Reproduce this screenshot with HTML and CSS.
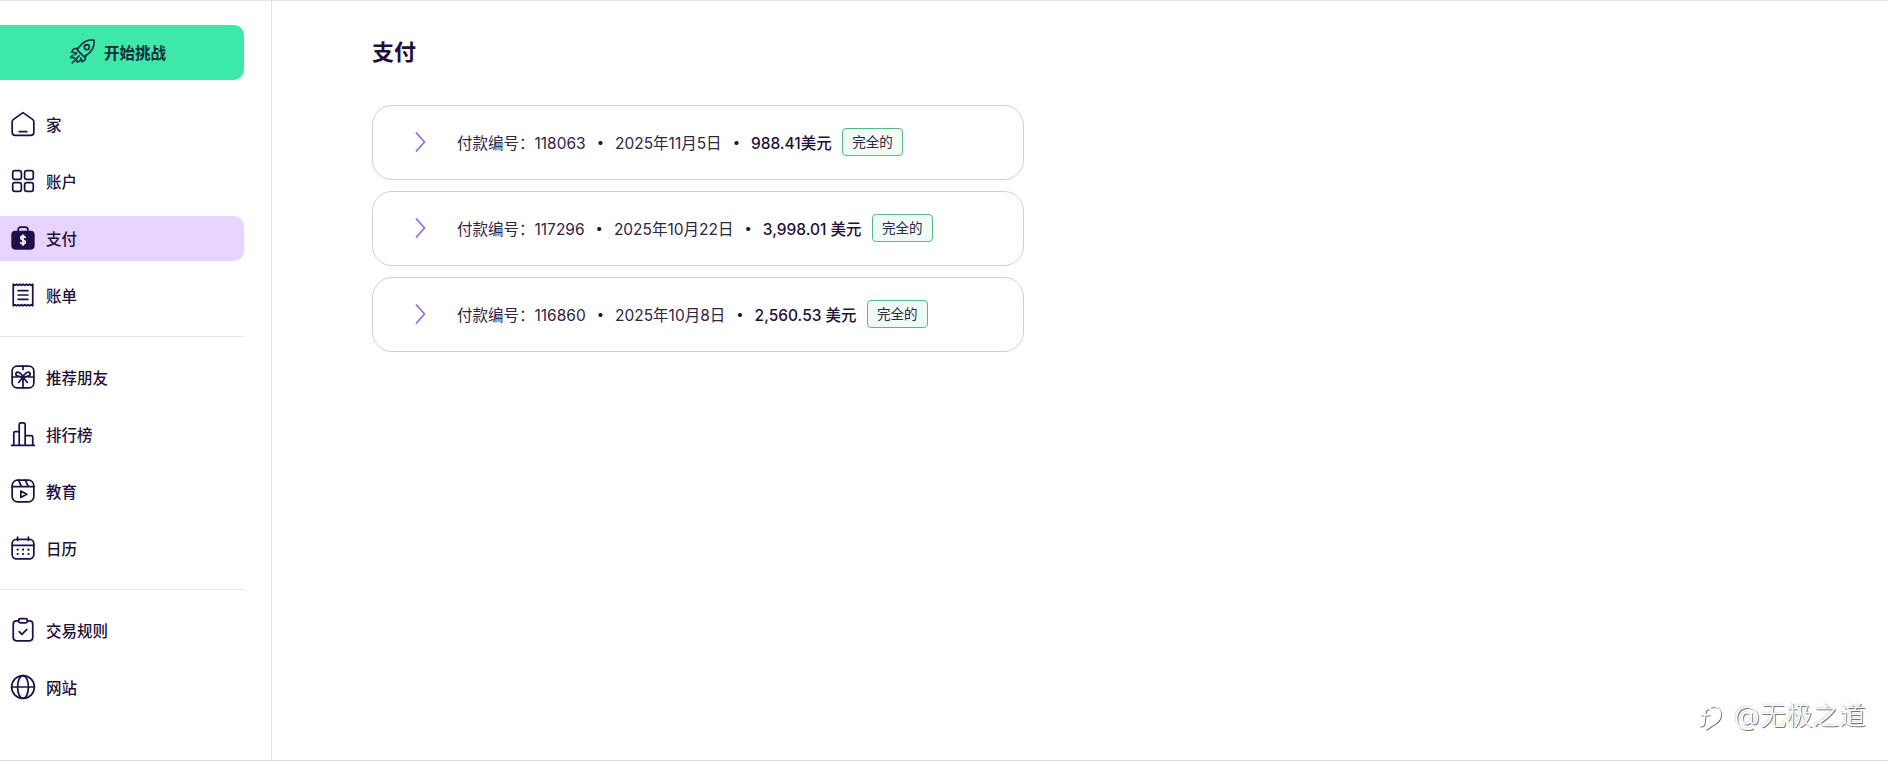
FILE: index.html
```html
<!DOCTYPE html>
<html lang="zh-CN">
<head>
    <meta charset="UTF-8">
    <meta name="viewport" content="width=device-width, initial-scale=1.0">
    <title>支付</title>
    <link rel="stylesheet" href="styles.css">
</head>
<body>
    <div class="page">
        <div class="sidebar">
            <button class="start-btn">
                <svg class="rocket" viewBox="0 0 24 24"><path d="M23 1c-4.500-.5-9 1-12 4.500L7.500 10l6.500 6.500 4.500-3.500C22 10 23.500 5.500 23 1z"/><circle cx="16.500" cy="7.500" r="2.300"/><path d="M8.500 8.500L4.500 9 2.500 12l3.500 1M15.500 15l-.5 4-3 2-1-3.500"/><path d="M7 13l-1.500 1.500M9.500 15.500L3 22M1.500 17l2-2M11 19l-2 2M5 17.500l-2.500-.5M7 19l.5 2.500"/></svg>
                开始挑战
            </button>

            <div class="nav-group first">
                <div class="nav-item">
                    <svg viewBox="0 0 24 24"><path d="M12 1.500l8.800 6.200c.8.600 1.200 1.300 1.200 2.300v9.500c0 1.700-1.300 3-3 3H5c-1.700 0-3-1.300-3-3V10c0-1 .4-1.700 1.200-2.300z"/><path d="M8.500 19h7"/></svg>
                    家
                </div>
                <div class="nav-item">
                    <svg viewBox="0 0 24 24"><rect x="2.500" y="2.500" width="8" height="8" rx="2"/><rect x="13.500" y="2.500" width="8" height="8" rx="2"/><rect x="2.500" y="13.500" width="8" height="8" rx="2"/><rect x="13.500" y="13.500" width="8" height="8" rx="2"/></svg>
                    账户
                </div>
                <div class="nav-item active">
                    <svg viewBox="0 0 24 24"><path class="solid" d="M5 6h14c1.700 0 3 1.300 3 3v10c0 1.700-1.300 3-3 3H5c-1.700 0-3-1.300-3-3V9c0-1.700 1.300-3 3-3z"/><path d="M7.500 6V4.500c0-1.400 1.100-2.500 2.500-2.500h4c1.400 0 2.500 1.100 2.500 2.500V6"/><path class="cut" d="M14 11.500c-.3-.8-1.100-1.200-2-1.200-1.200 0-2.100.7-2.100 1.700 0 2.300 4.300 1.300 4.300 3.700 0 1-1 1.800-2.200 1.800-1 0-1.900-.5-2.200-1.300M12 9.300v9.400"/></svg>
                    支付
                </div>
                <div class="nav-item">
                    <svg viewBox="0 0 24 24"><path d="M3 2l1.500 1L6 2l1.500 1L9 2l1.500 1L12 2l1.500 1L15 2l1.500 1L18 2l1.500 1L21 2v20l-1.500-1-1.500 1-1.500-1-1.500 1-1.500-1-1.500 1-1.500-1L9 22l-1.500-1L6 22l-1.500-1L3 22z"/><path d="M7.500 8h9M7.500 12h9M7.500 16h9"/></svg>
                    账单
                </div>
            </div>

            <div class="nav-group">
                <div class="nav-item">
                    <svg viewBox="0 0 24 24"><rect x="2" y="2" width="20" height="20" rx="4.500"/><path d="M2 12h5M17 12h5"/><path d="M12 12c-1-3.500-5.500-6-6.500-3.500S8.500 12 12 12zM12 12c1-3.500 5.500-6 6.500-3.500S15.500 12 12 12zM12 12l-4 5M12 12l4 5M12 12v10M12 2v3"/></svg>
                    推荐朋友
                </div>
                <div class="nav-item">
                    <svg viewBox="0 0 24 24"><path d="M1.500 22.500h21M3.500 22.500V11c0-.8.500-1.300 1.300-1.300H8.500M8.500 22.500V3.500c0-1 .700-1.700 1.700-1.700h2.100c1 0 1.700.7 1.700 1.700v19M14 13.500h5.500c1 0 1.500.6 1.500 1.500v7.500"/></svg>
                    排行榜
                </div>
                <div class="nav-item">
                    <svg viewBox="0 0 24 24"><rect x="2" y="2" width="20" height="20" rx="5"/><path d="M2 8h20M8 2l2.500 6M14 2l3 6"/><path d="M10 12l5.500 3-5.500 3z"/></svg>
                    教育
                </div>
                <div class="nav-item">
                    <svg viewBox="0 0 24 24"><rect x="2" y="4" width="20" height="18" rx="4"/><path d="M2 9.500h20M7 2v3M17 2v3"/><path class="dots" d="M7 13.500h.1M12 13.500h.1M17 13.500h.1M7 17.500h.1M12 17.500h.1M17 17.500h.1"/></svg>
                    日历
                </div>
            </div>

            <div class="nav-group last">
                <div class="nav-item">
                    <svg viewBox="0 0 24 24"><path d="M8 3.500H6c-1.700 0-3 1.300-3 3V19c0 1.700 1.300 3 3 3h12c1.700 0 3-1.300 3-3V6.500c0-1.700-1.300-3-3-3h-2"/><rect x="8" y="1.500" width="8" height="4" rx="1.500"/><path d="M8.500 13.500l2.500 2.500 4.500-4.500"/></svg>
                    交易规则
                </div>
                <div class="nav-item">
                    <svg viewBox="0 0 24 24"><circle cx="12" cy="12" r="10.500"/><path d="M1.500 12h21"/><ellipse cx="12" cy="12" rx="5" ry="10.500"/></svg>
                    网站
                </div>
            </div>
        </div>

        <div class="content">
            <h1>支付</h1>

            <div class="payment-list">
                <div class="payment">
                    <svg class="chevron" viewBox="0 0 10 20"><path d="M1 1l8 9-8 9"/></svg>
                    <span>付款编号：118063</span>
                    <span class="dot">•</span>
                    <span>2025年11月5日</span>
                    <span class="dot">•</span>
                    <span class="amount">988.41美元</span>
                    <span class="badge">完全的</span>
                </div>
                <div class="payment">
                    <svg class="chevron" viewBox="0 0 10 20"><path d="M1 1l8 9-8 9"/></svg>
                    <span>付款编号：117296</span>
                    <span class="dot">•</span>
                    <span>2025年10月22日</span>
                    <span class="dot">•</span>
                    <span class="amount">3,998.01 美元</span>
                    <span class="badge">完全的</span>
                </div>
                <div class="payment">
                    <svg class="chevron" viewBox="0 0 10 20"><path d="M1 1l8 9-8 9"/></svg>
                    <span>付款编号：116860</span>
                    <span class="dot">•</span>
                    <span>2025年10月8日</span>
                    <span class="dot">•</span>
                    <span class="amount">2,560.53 美元</span>
                    <span class="badge">完全的</span>
                </div>
            </div>
        </div>
    </div>

    <!-- 水印 -->
    <div class="watermark">
        <svg viewBox="0 0 24 26"><path class="wm-shadow" d="M13 2c6-2 10 2 9.500 8-.4 5-4 8-8.500 10-2 1-3 3-6 4M7 9c0-3 1-5 3-5M7 9l-1 9c0 2-1 3-4 3M3 10h8"/><path d="M13 2c6-2 10 2 9.500 8-.4 5-4 8-8.500 10-2 1-3 3-6 4M7 9c0-3 1-5 3-5M7 9l-1 9c0 2-1 3-4 3M3 10h8"/></svg>
        <span>@无极之道</span>
    </div>
</body>
</html>
```

FILE: styles.css
```css
* {
    box-sizing: border-box;
}
body {
    font-family: Inter, "Noto Sans CJK SC", sans-serif;
    background-color: white;
    margin: 0;
    color: #1e1038;
}
.page {
    display: flex;
    height: 761px;
    border-top: 1px solid #e6e6e6;
    border-bottom: 1px solid #dcdcdc;
    overflow: hidden;
}
.sidebar {
    width: 272px;
    flex-shrink: 0;
    padding: 24px 27px 0 0;
    border-right: 1px solid #e4e4e4;
}
.start-btn {
    display: flex;
    align-items: center;
    justify-content: center;
    gap: 9px;
    width: 100%;
    height: 55px;
    padding: 0 9px 2px 0;
    border: none;
    border-radius: 0 10px 10px 0;
    background-color: #3ee8a9;
    color: #0f2b3a;
    font-family: inherit;
    font-size: 15.5px;
    font-weight: 700;
}
.rocket {
    width: 26px;
    height: 26px;
    fill: none;
    stroke: #10303a;
    stroke-width: 1.5;
    stroke-linecap: round;
    stroke-linejoin: round;
}
.nav-group {
    display: flex;
    flex-direction: column;
    gap: 12px;
    padding: 18px 0 18px;
    border-bottom: 1px solid #e6e6e6;
}
.nav-group.first {
    padding-top: 22px;
}
.nav-group.last {
    border-bottom: none;
}
.nav-item {
    display: flex;
    align-items: center;
    gap: 10px;
    height: 45px;
    padding: 0 0 2px 10px;
    border-radius: 0 10px 10px 0;
    font-size: 15.5px;
    font-weight: 500;
}
.nav-item svg {
    width: 26px;
    height: 26px;
    fill: none;
    stroke: #1f0f47;
    stroke-width: 1.6;
    stroke-linecap: round;
    stroke-linejoin: round;
}
.nav-item.active {
    background-color: #e6d4fd;
}
.nav-item .solid {
    fill: #1f0f47;
}
.nav-item .cut {
    stroke: white;
    stroke-width: 1.5;
}
.nav-item .dots {
    stroke-width: 2;
}
.content {
    flex: 1;
    padding: 0 0 0 100px;
}
.content h1 {
    margin: 35px 0 37px;
    font-size: 22px;
    line-height: 32px;
    font-weight: 700;
}
.payment-list {
    display: flex;
    flex-direction: column;
    gap: 11px;
    width: 652px;
}
.payment {
    display: flex;
    align-items: center;
    gap: 10px;
    height: 75px;
    padding: 0 0 2px 42px;
    border: 1.5px solid #d0d0d3;
    border-radius: 20px;
    font-size: 15.5px;
    color: #2e2444;
}
.chevron {
    width: 11px;
    height: 20px;
    margin-right: 21px;
    fill: none;
    stroke: #9a6cd2;
    stroke-width: 1.8;
    stroke-linecap: round;
    stroke-linejoin: round;
}
.dot {
    padding: 0 1px;
    color: #1e1038;
    font-size: 13px;
}
.amount {
    font-weight: 500;
    color: #1e1038;
}
.badge {
    padding: 3px 9.5px;
    border: 1.5px solid #55b987;
    border-radius: 4px;
    background-color: #effbf5;
    font-size: 13.5px;
    line-height: 20px;
    color: #2e2444;
}
.watermark {
    position: absolute;
    left: 1698px;
    top: 697px;
    display: flex;
    align-items: center;
    gap: 12px;
    font-size: 26.5px;
    font-weight: 300;
    line-height: 36px;
    color: white;
    text-shadow: 1px 1px 0 #777, -1px -1px 1px #ddd;
}
.watermark svg {
    width: 24px;
    height: 26px;
    margin-top: 6px;
    fill: none;
    stroke: white;
    stroke-width: 1.5;
    stroke-linecap: round;
}
.watermark .wm-shadow {
    stroke: #666;
    transform: translate(0.8px, 0.8px);
}
```
